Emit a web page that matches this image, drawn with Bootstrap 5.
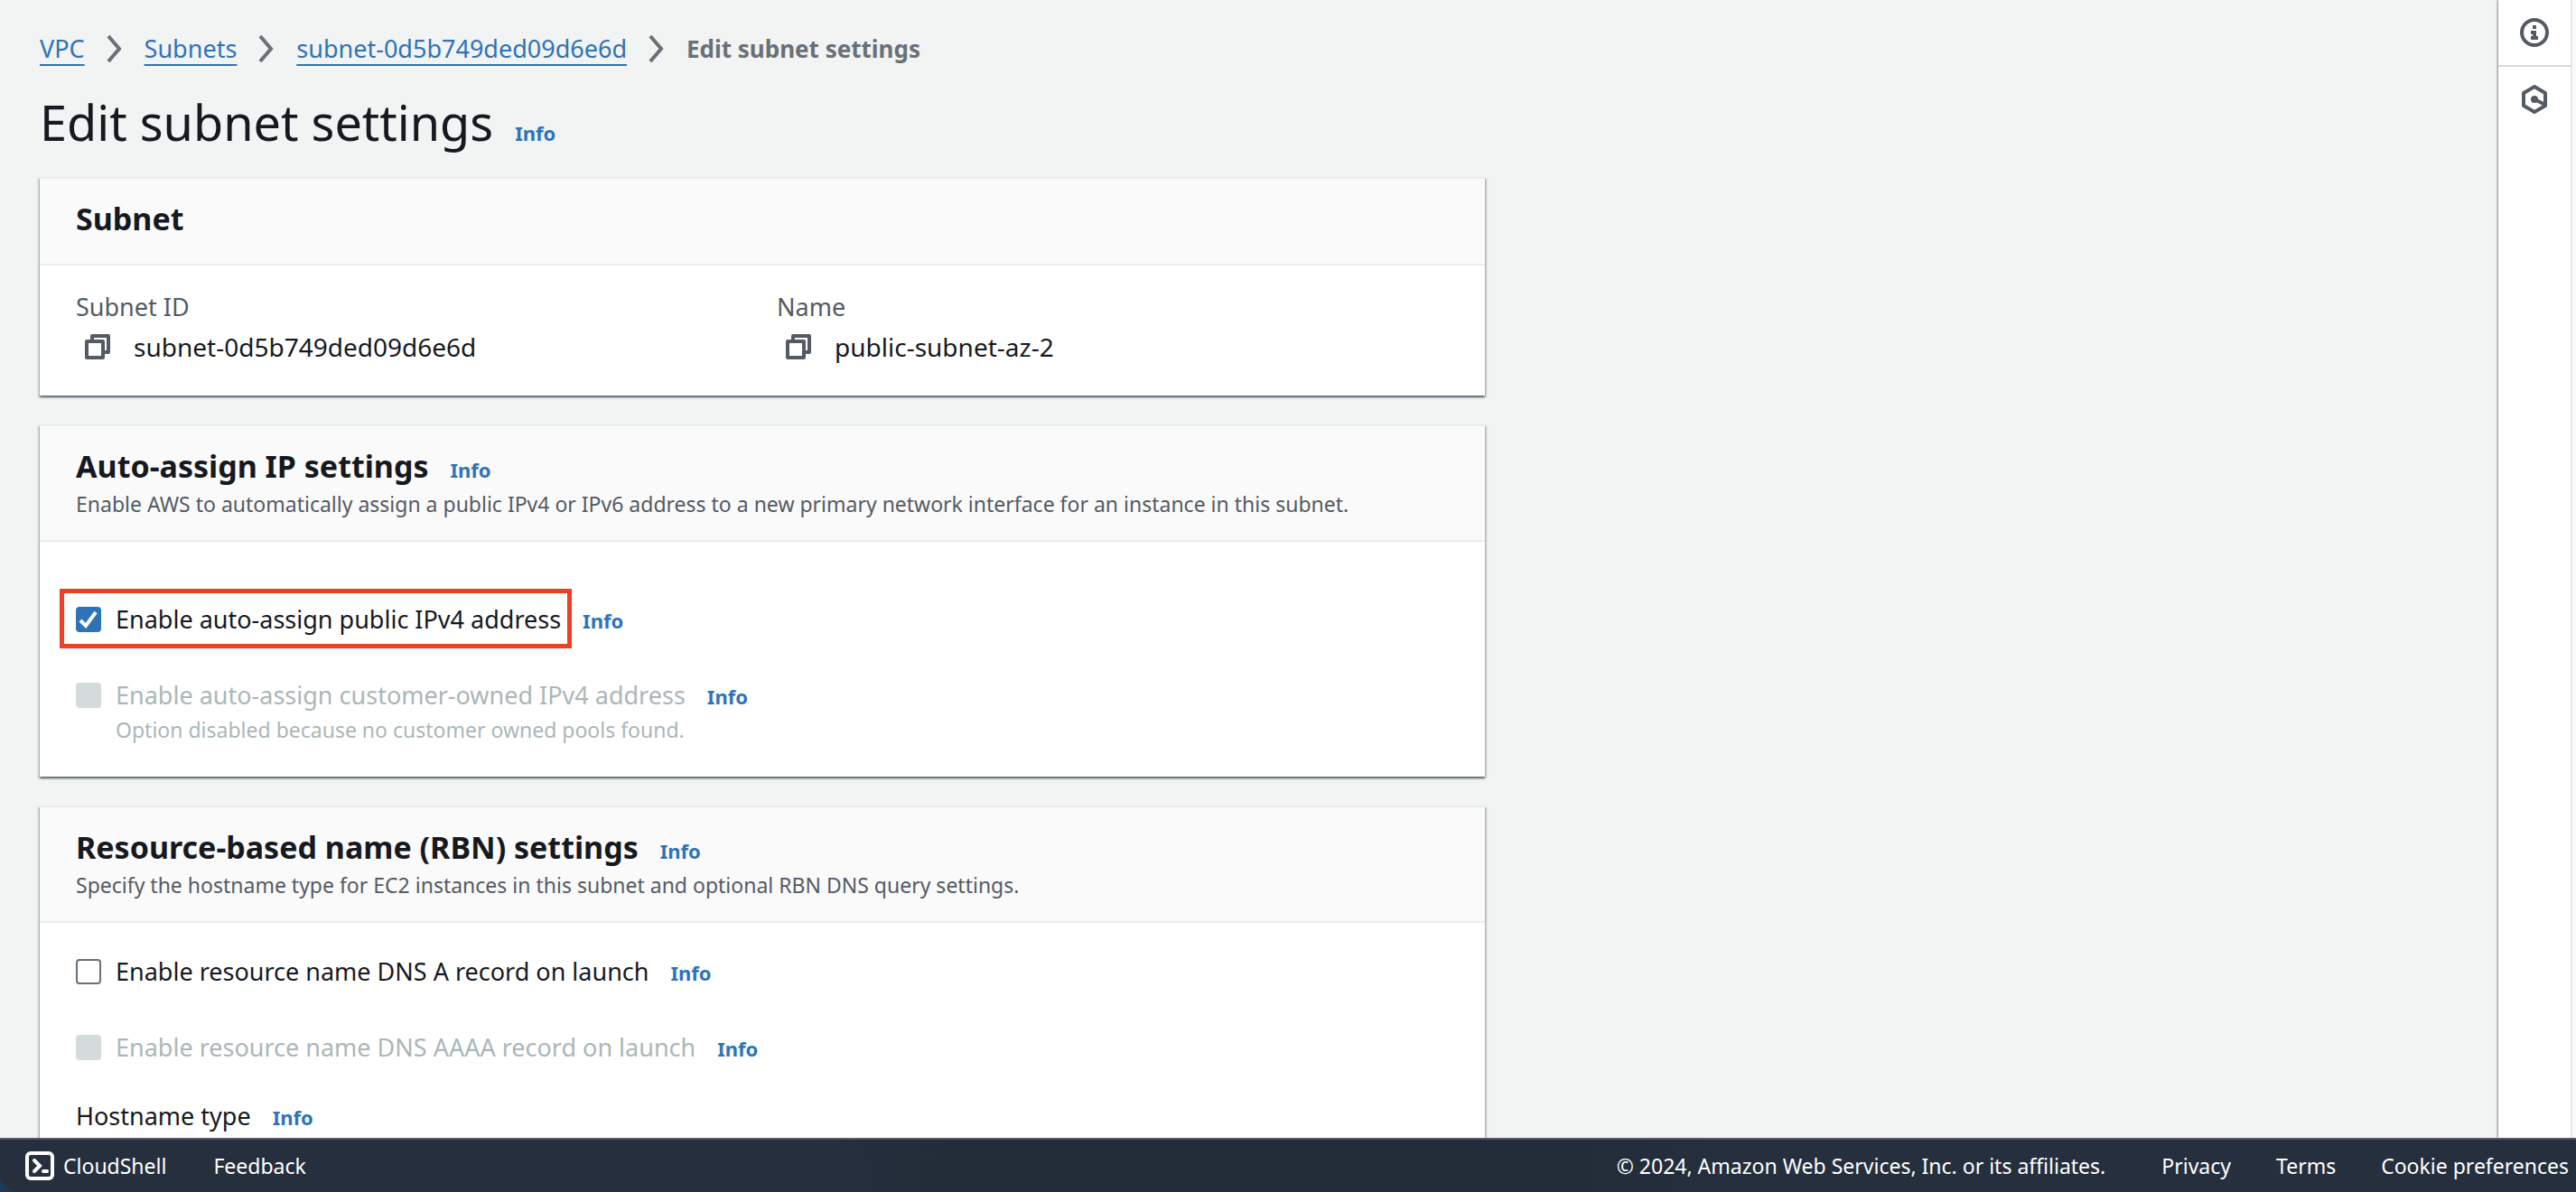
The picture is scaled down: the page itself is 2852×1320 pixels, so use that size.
<!DOCTYPE html>
<html lang="en">
<head>
<meta charset="utf-8">
<meta name="viewport" content="width=device-width, initial-scale=1">
<title>Edit subnet settings | VPC Console</title>
<link rel="stylesheet" href="https://cdn.jsdelivr.net/npm/bootstrap@5.3.0/dist/css/bootstrap.min.css">
<style>
  :root { --ink: #16191f; --muted-ink: #545b64; --link: #2e73b8; --off: #aab7b8; --rule: #eaeded; }
  body { font-family: "Noto Sans", "Open Sans", sans-serif; font-size: 27px; line-height: 44px; color: var(--ink); background: #1d3a5a; }
  a { color: var(--link); text-decoration: none; }
  .console-body { background: #f2f3f3; }
  .content-area { padding: 34px 44px 0; }
  .page-column { max-width: 1600px; }
  .crumbs { line-height: 40px; gap: 23px; margin-bottom: 29px; }
  .crumbs a { text-decoration: underline; text-decoration-thickness: 2px; text-underline-offset: 7px; }
  .crumbs svg { width: 20px; height: 32px; }
  .crumbs .here { color: #687078; font-weight: 700; font-size: 26px; }
  .page-title { font-size: 54px; line-height: 64px; font-weight: 400; }
  .page-head { gap: 24px; margin-bottom: 29px; }
  .info-link { font-size: 22px; line-height: 24px; font-weight: 700; }
  .panel { border: 0; border-top: 2px solid var(--rule); border-radius: 0; margin-bottom: 32px; background: #fff; color: inherit;
    box-shadow: 0 2px 2px 0 rgba(0,28,36,.5), 2px 2px 2px 0 rgba(0,28,36,.15), -2px 2px 2px 0 rgba(0,28,36,.15); }
  .panel-head { background: #fafafa; border-bottom: 2px solid var(--rule); border-radius: 0 !important; padding: 22px 40px 24px; }
  .panel-head h2 { font-size: 34px; line-height: 44px; font-weight: 700; }
  .title-line { gap: 24px; margin-bottom: 4px; }
  .hint { font-size: 23px; line-height: 32px; color: var(--muted-ink); }
  .panel-body { padding: 24px 40px 32px; }
  .panel-body.roomy { padding-top: 64px; }
  .panel-body.snug { padding-top: 32px; }
  .field-name { color: var(--muted-ink); }
  .field-value { font-size: 28px; }
  .copy-btn { border: 0; background: none; padding: 0 8px; margin-right: 16px; line-height: 0; }
  .copy-btn svg { width: 32px; height: 32px; }
  .option { gap: 24px; }
  .option + .option { margin-top: 40px; }
  .tick { gap: 16px; padding: 0; margin: 0; min-height: 0; }
  .tick .form-check-input { float: none; margin: 0; width: 28px; height: 28px; border: 2px solid #687078; border-radius: 4px; flex: none; }
  .tick .form-check-input:checked { background-color: var(--link); border-color: var(--link);
    background-size: 28px 28px; background-image: url("data:image/svg+xml,%3csvg xmlns='http://www.w3.org/2000/svg' viewBox='0 0 28 28'%3e%3cpath d='M5 15l6 6L22 6' fill='none' stroke='%23fff' stroke-width='4'/%3e%3c/svg%3e"); }
  .tick .form-check-input:disabled { background-color: #d5dbdb; border-color: #d5dbdb; opacity: 1; }
  .tick .form-check-input:disabled ~ .form-check-label { opacity: 1; color: var(--off); }
  .flagged { position: relative; }
  .flagged::after { content: ""; position: absolute; inset: -12px -12px -10px -18px; border: 5px solid #ee4025; pointer-events: none; }
  .option-note { color: var(--off); padding-left: 44px; margin-bottom: 4px; }
  .hostname { margin-top: 32px; gap: 24px; }
  .side-rail { width: 86px; background: #fff; border-right: 4px solid #fafafa; box-shadow: -1px 0 2px rgba(0,28,36,.5); }
  .rail-inner { border-right: 2px solid #e6e8e8; }
  .side-rail button { border: 0; background: none; height: 72px; padding: 0; line-height: 0; }
  .side-rail button + button { border-top: 2px solid #d5dbdb; height: 74px; }
  .side-rail svg { width: 32px; height: 32px; }
  .console-footer { height: 60px; border-top: 2px solid #545b64; border-bottom-left-radius: 20px; font-size: 23px; line-height: 32px; padding: 0 8px 0 28px;
    background: linear-gradient(90deg, #252f3e 31%, #232d39 37%, #232d39 60%, #252f3e 69%); }
  .console-footer a { color: #fff; }
  .shell-link { gap: 10px; }
  .shell-link svg { width: 32px; height: 32px; }
  .foot-left { gap: 52px; }
  .foot-right { gap: 50px; color: #fff; }
  .copyright { margin-right: 12px; }
</style>
<script src="https://cdn.jsdelivr.net/npm/bootstrap@5.3.0/dist/js/bootstrap.bundle.min.js" defer></script>
</head>
<body class="vh-100 d-flex flex-column overflow-hidden">

<div class="console-body d-flex flex-fill overflow-hidden">
  <main class="content-area flex-fill overflow-hidden">
    <div class="page-column">
      <nav class="crumbs d-flex align-items-center" aria-label="Breadcrumb">
        <a href="#">VPC</a>
        <svg viewBox="0 0 20 32" fill="none" stroke="#687078" stroke-width="4" aria-hidden="true"><path d="M3 2l12 14L3 30"/></svg>
        <a href="#">Subnets</a>
        <svg viewBox="0 0 20 32" fill="none" stroke="#687078" stroke-width="4" aria-hidden="true"><path d="M3 2l12 14L3 30"/></svg>
        <a href="#">subnet-0d5b749ded09d6e6d</a>
        <svg viewBox="0 0 20 32" fill="none" stroke="#687078" stroke-width="4" aria-hidden="true"><path d="M3 2l12 14L3 30"/></svg>
        <span class="here" aria-current="page">Edit subnet settings</span>
      </nav>

      <div class="page-head d-flex align-items-baseline">
        <h1 class="page-title m-0">Edit subnet settings</h1>
        <a class="info-link" href="#">Info</a>
      </div>

      <section class="panel card">
        <div class="panel-head card-header">
          <div class="title-line d-flex align-items-baseline"><h2 class="m-0">Subnet</h2></div>
        </div>
        <div class="panel-body card-body">
          <div class="row" style="--bs-gutter-x:32px">
            <div class="col-6">
              <div class="field-name">Subnet ID</div>
              <div class="field-value d-flex align-items-center">
                <button class="copy-btn" type="button" aria-label="Copy subnet ID">
                  <svg viewBox="0 0 32 32" fill="none" stroke="#545b64" stroke-width="4" stroke-linejoin="round" aria-hidden="true"><path d="M4 10h18v18H4z"/><path d="M10 10V4h18v18h-6"/></svg>
                </button>
                <span>subnet-0d5b749ded09d6e6d</span>
              </div>
            </div>
            <div class="col-6">
              <div class="field-name">Name</div>
              <div class="field-value d-flex align-items-center">
                <button class="copy-btn" type="button" aria-label="Copy name">
                  <svg viewBox="0 0 32 32" fill="none" stroke="#545b64" stroke-width="4" stroke-linejoin="round" aria-hidden="true"><path d="M4 10h18v18H4z"/><path d="M10 10V4h18v18h-6"/></svg>
                </button>
                <span>public-subnet-az-2</span>
              </div>
            </div>
          </div>
        </div>
      </section>

      <section class="panel card">
        <div class="panel-head card-header">
          <div class="title-line d-flex align-items-baseline">
            <h2 class="m-0">Auto-assign IP settings</h2>
            <a class="info-link" href="#">Info</a>
          </div>
          <div class="hint">Enable AWS to automatically assign a public IPv4 or IPv6 address to a new primary network interface for an instance in this subnet.</div>
        </div>
        <div class="panel-body roomy card-body">
          <div class="option d-flex align-items-baseline">
            <div class="tick flagged form-check d-flex align-items-baseline">
              <input class="form-check-input align-self-center" type="checkbox" id="public-ipv4" checked>
              <label class="form-check-label" for="public-ipv4">Enable auto-assign public IPv4 address</label>
            </div>
            <a class="info-link" href="#">Info</a>
          </div>
          <div class="option d-flex align-items-baseline">
            <div class="tick form-check d-flex align-items-baseline">
              <input class="form-check-input align-self-center" type="checkbox" id="customer-ipv4" aria-describedby="customer-ipv4-note" disabled>
              <label class="form-check-label" for="customer-ipv4">Enable auto-assign customer-owned IPv4 address</label>
            </div>
            <a class="info-link" href="#">Info</a>
          </div>
          <div class="hint option-note" id="customer-ipv4-note">Option disabled because no customer owned pools found.</div>
        </div>
      </section>

      <section class="panel card">
        <div class="panel-head card-header">
          <div class="title-line d-flex align-items-baseline">
            <h2 class="m-0">Resource-based name (RBN) settings</h2>
            <a class="info-link" href="#">Info</a>
          </div>
          <div class="hint">Specify the hostname type for EC2 instances in this subnet and optional RBN DNS query settings.</div>
        </div>
        <div class="panel-body snug card-body">
          <div class="option d-flex align-items-baseline">
            <div class="tick form-check d-flex align-items-baseline">
              <input class="form-check-input align-self-center" type="checkbox" id="dns-a">
              <label class="form-check-label" for="dns-a">Enable resource name DNS A record on launch</label>
            </div>
            <a class="info-link" href="#">Info</a>
          </div>
          <div class="option d-flex align-items-baseline">
            <div class="tick form-check d-flex align-items-baseline">
              <input class="form-check-input align-self-center" type="checkbox" id="dns-aaaa" disabled>
              <label class="form-check-label" for="dns-aaaa">Enable resource name DNS AAAA record on launch</label>
            </div>
            <a class="info-link" href="#">Info</a>
          </div>
          <div class="hostname d-flex align-items-baseline">
            <span>Hostname type</span>
            <a class="info-link" href="#">Info</a>
          </div>
        </div>
      </section>
    </div>
  </main>

  <aside class="side-rail flex-shrink-0 d-flex">
    <div class="rail-inner flex-fill d-flex flex-column">
      <button type="button" aria-label="Info panel">
        <svg viewBox="0 0 32 32" aria-hidden="true"><circle cx="16" cy="16" r="14" fill="none" stroke="#545b64" stroke-width="4"/><path d="M14 8h4v4h-4zM12 14h6v6h2v4h-8v-4h2v-2h-2z" fill="#545b64"/></svg>
      </button>
      <button type="button" aria-label="Diagnostics panel">
        <svg viewBox="0 0 32 32" aria-hidden="true"><path d="M16 2l12 7v14l-12 7-12-7V9z" fill="none" stroke="#545b64" stroke-width="4" stroke-linejoin="round"/><circle cx="16" cy="16" r="4" fill="#545b64"/><path d="M16 16l12 6" stroke="#545b64" stroke-width="4"/></svg>
      </button>
    </div>
  </aside>
</div>

<footer class="console-footer flex-shrink-0 d-flex align-items-center justify-content-between">
  <div class="foot-left d-flex align-items-center">
    <a class="shell-link d-flex align-items-center" href="#">
      <svg viewBox="0 0 32 32" fill="none" stroke="#fff" stroke-width="4" stroke-linecap="round" aria-hidden="true"><rect x="2" y="2" width="28" height="28" rx="4"/><path d="M10 10l6 6-6 6"/><path d="M20 22h4"/></svg>
      CloudShell
    </a>
    <a href="#">Feedback</a>
  </div>
  <div class="foot-right d-flex align-items-center">
    <span class="copyright">© 2024, Amazon Web Services, Inc. or its affiliates.</span>
    <a href="#">Privacy</a>
    <a href="#">Terms</a>
    <a href="#">Cookie preferences</a>
  </div>
</footer>
</body>
</html>
